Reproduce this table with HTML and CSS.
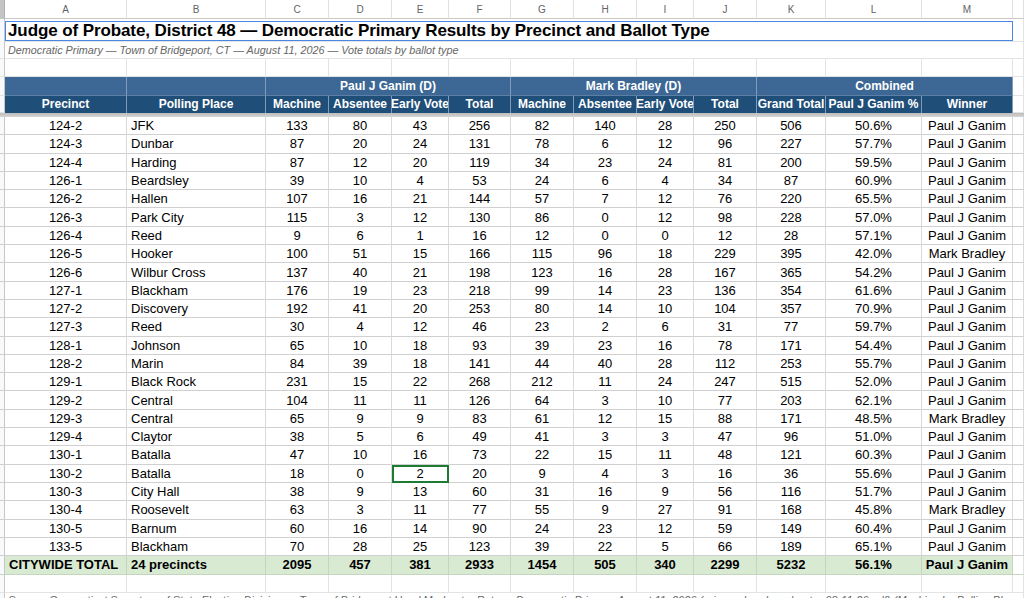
FILE: index.html
```html
<!DOCTYPE html>
<html>
<head>
<meta charset="utf-8">
<link rel="stylesheet" href="styles.css">
</head>
<body>
<div class="sheet">
  <div class="row colhead">
    <div class="c rh corner"></div>
    <div class="c">A</div><div class="c">B</div><div class="c">C</div><div class="c">D</div><div class="c">E</div><div class="c">F</div><div class="c">G</div><div class="c">H</div><div class="c">I</div><div class="c">J</div><div class="c">K</div><div class="c">L</div><div class="c">M</div><div class="c"></div>
  </div>
  <div class="row title-row">
    <div class="c rh"></div>
    <div class="c title span-all"><span class="title-box">Judge of Probate, District 48 — Democratic Primary Results by Precinct and Ballot Type</span></div>
    <div class="c"></div>
  </div>
  <div class="row plain">
    <div class="c rh"></div>
    <div class="c subtitle span-all">Democratic Primary — Town of Bridgeport, CT — August 11, 2026 — Vote totals by ballot type</div>
    <div class="c"></div>
  </div>
  <div class="row plain">
    <div class="c rh"></div>
    <div class="c"></div><div class="c"></div><div class="c"></div><div class="c"></div><div class="c"></div><div class="c"></div><div class="c"></div><div class="c"></div><div class="c"></div><div class="c"></div><div class="c"></div><div class="c"></div><div class="c"></div><div class="c"></div>
  </div>
  <div class="row hdr1">
    <div class="c rh"></div>
    <div class="c"></div><div class="c"></div>
    <div class="c span4">Paul J Ganim (D)</div>
    <div class="c span4">Mark Bradley (D)</div>
    <div class="c span3">Combined</div>
    <div class="c blank"></div>
  </div>
  <div class="row hdr2">
    <div class="c rh"></div>
    <div class="c">Precinct</div><div class="c">Polling Place</div>
    <div class="c">Machine</div><div class="c">Absentee</div><div class="c">Early Vote</div><div class="c">Total</div>
    <div class="c">Machine</div><div class="c">Absentee</div><div class="c">Early Vote</div><div class="c">Total</div>
    <div class="c">Grand Total</div><div class="c">Paul J Ganim %</div><div class="c">Winner</div>
    <div class="c blank"></div>
  </div>
  <div class="frozen"></div>
  <div id="data"></div>
  <div class="row total">
    <div class="c rh"></div>
    <div class="c left">CITYWIDE TOTAL</div><div class="c left">24 precincts</div>
    <div class="c">2095</div><div class="c">457</div><div class="c">381</div><div class="c">2933</div>
    <div class="c">1454</div><div class="c">505</div><div class="c">340</div><div class="c">2299</div>
    <div class="c">5232</div><div class="c">56.1%</div><div class="c">Paul J Ganim</div>
    <div class="c blank"></div>
  </div>
  <div class="row plain">
    <div class="c rh"></div>
    <div class="c"></div><div class="c"></div><div class="c"></div><div class="c"></div><div class="c"></div><div class="c"></div><div class="c"></div><div class="c"></div><div class="c"></div><div class="c"></div><div class="c"></div><div class="c"></div><div class="c"></div><div class="c"></div>
  </div>
  <div class="row plain">
    <div class="c rh"></div>
    <div class="c source span-all">Source: Connecticut Secretary of State Election Division — Town of Bridgeport Head Moderator Return, Democratic Primary, August 11, 2026 (primary-head-moderator-08-11-26.pdf) (Machine by Polling Place)</div>
    <div class="c"></div>
  </div>
</div>
<script src="app.js"></script>
</body>
</html>
```

FILE: app.js
```js
const rows = [
["124-2","JFK",133,80,43,256,82,140,28,250,506,"50.6%","Paul J Ganim"],
["124-3","Dunbar",87,20,24,131,78,6,12,96,227,"57.7%","Paul J Ganim"],
["124-4","Harding",87,12,20,119,34,23,24,81,200,"59.5%","Paul J Ganim"],
["126-1","Beardsley",39,10,4,53,24,6,4,34,87,"60.9%","Paul J Ganim"],
["126-2","Hallen",107,16,21,144,57,7,12,76,220,"65.5%","Paul J Ganim"],
["126-3","Park City",115,3,12,130,86,0,12,98,228,"57.0%","Paul J Ganim"],
["126-4","Reed",9,6,1,16,12,0,0,12,28,"57.1%","Paul J Ganim"],
["126-5","Hooker",100,51,15,166,115,96,18,229,395,"42.0%","Mark Bradley"],
["126-6","Wilbur Cross",137,40,21,198,123,16,28,167,365,"54.2%","Paul J Ganim"],
["127-1","Blackham",176,19,23,218,99,14,23,136,354,"61.6%","Paul J Ganim"],
["127-2","Discovery",192,41,20,253,80,14,10,104,357,"70.9%","Paul J Ganim"],
["127-3","Reed",30,4,12,46,23,2,6,31,77,"59.7%","Paul J Ganim"],
["128-1","Johnson",65,10,18,93,39,23,16,78,171,"54.4%","Paul J Ganim"],
["128-2","Marin",84,39,18,141,44,40,28,112,253,"55.7%","Paul J Ganim"],
["129-1","Black Rock",231,15,22,268,212,11,24,247,515,"52.0%","Paul J Ganim"],
["129-2","Central",104,11,11,126,64,3,10,77,203,"62.1%","Paul J Ganim"],
["129-3","Central",65,9,9,83,61,12,15,88,171,"48.5%","Mark Bradley"],
["129-4","Claytor",38,5,6,49,41,3,3,47,96,"51.0%","Paul J Ganim"],
["130-1","Batalla",47,10,16,73,22,15,11,48,121,"60.3%","Paul J Ganim"],
["130-2","Batalla",18,0,2,20,9,4,3,16,36,"55.6%","Paul J Ganim"],
["130-3","City Hall",38,9,13,60,31,16,9,56,116,"51.7%","Paul J Ganim"],
["130-4","Roosevelt",63,3,11,77,55,9,27,91,168,"45.8%","Mark Bradley"],
["130-5","Barnum",60,16,14,90,24,23,12,59,149,"60.4%","Paul J Ganim"],
["133-5","Blackham",70,28,25,123,39,22,5,66,189,"65.1%","Paul J Ganim"]
];
const host = document.getElementById("data");
rows.forEach((r, i) => {
  const row = document.createElement("div");
  row.className = "row data";
  let html = '<div class="c rh"></div>';
  r.forEach((v, j) => {
    let cls = "c";
    if (j === 1) cls += " left";
    if (i === 19 && j === 4) cls += " selected";
    html += '<div class="' + cls + '">' + v + '</div>';
  });
  html += '<div class="c"></div>';
  row.innerHTML = html;
  host.appendChild(row);
});
```

FILE: styles.css
```css
html, body {
  margin: 0;
  padding: 0;
  background: #ffffff;
  overflow: hidden;
}
body {
  font-family: Arial, "Liberation Sans", sans-serif;
  color: #000;
}
.sheet {
  width: 1024px;
  height: 598px;
  overflow: hidden;
}
.row {
  display: grid;
  grid-template-columns: 5px 122px 139px 63px 63px 57px 62px 63px 63px 57px 63px 69px 96px 91px 11px;
  height: 18.3px;
}
.c {
  box-sizing: border-box;
  border-right: 1px solid #e2e3e3;
  border-bottom: 1px solid #e2e3e3;
  display: flex;
  align-items: center;
  justify-content: center;
  font-size: 13px;
  white-space: nowrap;
  overflow: hidden;
  position: relative;
}
.c.left {
  justify-content: flex-start;
  padding-left: 4px;
}
.rh {
  background: #f8f9fa;
  border-right: 1px solid #c7c7c7;
}
.colhead {
  height: 19px;
}
.colhead .c {
  font-size: 10px;
  color: #5f6368;
  background: #ffffff;
  border-bottom: 1px solid #c7c7c7;
  border-right: 1px solid #e0e0e0;
}
.colhead .corner {
  background: #c4c4c4;
  border-right: 1px solid #b0b0b0;
}
.span-all {
  grid-column: span 13;
}
.title-row {
  height: 22px;
}
.title {
  justify-content: flex-start;
  align-items: flex-start;
  padding: 0;
  border-right: none;
  overflow: visible;
}
.title-box {
  box-sizing: border-box;
  display: flex;
  align-items: center;
  width: 100%;
  height: 20px;
  margin-top: 2px;
  padding-left: 2px;
  border: 1.5px solid #4a86e8;
  font-size: 17px;
  font-weight: bold;
  letter-spacing: -0.1px;
}
.plain {
  height: 18px;
}
.subtitle {
  justify-content: flex-start;
  align-items: flex-end;
  padding-left: 3px;
  padding-bottom: 2px;
  font-size: 10.8px;
  font-style: italic;
  color: #666666;
  border-right: none;
}
.source {
  justify-content: flex-start;
  align-items: flex-start;
  padding-left: 3px;
  padding-top: 1px;
  font-size: 11px;
  font-style: italic;
  color: #666666;
  border-right: none;
  border-bottom: none;
}
.hdr1 {
  height: 18.5px;
}
.hdr2 {
  height: 17.5px;
}
.hdr1 .c, .hdr2 .c {
  color: #ffffff;
  font-size: 12px;
  font-weight: bold;
  border-right: 1px solid #7f9cbc;
  border-bottom: 1px solid #5c7fa6;
}
.hdr1 .c {
  background: #3d6794;
}
.hdr2 .c {
  background: #1f4e79;
  border-bottom: none;
}
.hdr1 .rh, .hdr2 .rh {
  background: #f8f9fa;
  border-right: 1px solid #c7c7c7;
  border-bottom: 1px solid #e2e3e3;
}
.hdr1 .blank, .hdr2 .blank {
  background: #ffffff;
  border-right: 1px solid #e2e3e3;
  border-bottom: 1px solid #e2e3e3;
}
.span4 {
  grid-column: span 4;
}
.span3 {
  grid-column: span 3;
}
.frozen {
  height: 4px;
  background: linear-gradient(#bdbdbd, #d4d4d4);
}
.data .c {
  border-bottom: 1px solid #d0d0d0;
  border-right: 1px solid #d9d9d9;
}
.data .rh {
  border-right: 1px solid #c7c7c7;
}
.selected {
  outline: 2px solid #1e7b34;
  outline-offset: -2px;
}
.total {
  height: 18.5px;
}
.total .c {
  background: #d9ead3;
  font-weight: bold;
  border-bottom: 1px solid #c4d6bd;
  border-right: 1px solid #c4d6bd;
}
.total .rh {
  background: #f8f9fa;
  border-right: 1px solid #c7c7c7;
}
.total .blank {
  background: #ffffff;
  border-right: 1px solid #e2e3e3;
}
```
